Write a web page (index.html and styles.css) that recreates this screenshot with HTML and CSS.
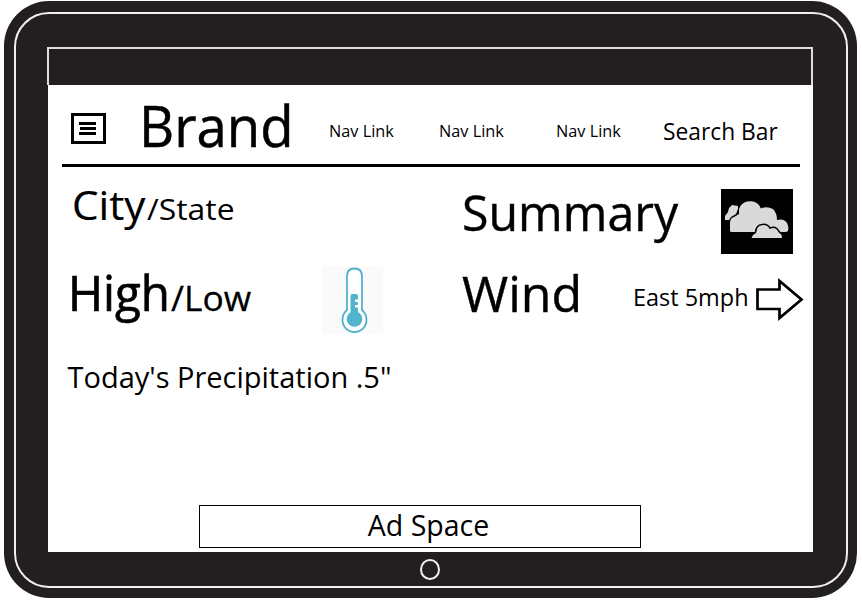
FILE: index.html
```html
<!DOCTYPE html>
<html lang="en">
<head>
<meta charset="utf-8">
<title>Weather</title>
<link rel="stylesheet" href="styles.css">
</head>
<body>
<div class="tablet">
  <div class="status-bar"></div>
  <main class="screen">
    <header class="header">
      <button class="menu" aria-label="Menu"><span></span><span></span><span></span></button>
      <div class="brand">Brand</div>
      <nav class="nav">
        <a>Nav Link</a>
        <a>Nav Link</a>
        <a>Nav Link</a>
      </nav>
      <div class="search">Search Bar</div>
    </header>
    <section class="forecast">
      <div class="row row-place">
        <div class="cell">
          <div class="pair"><span class="city">City</span><span class="state">/State</span></div>
        </div>
        <div class="cell">
          <div class="summary">Summary</div>
          <svg class="cloud" width="72" height="65" viewBox="0 0 72 65">
            <rect width="72" height="65" fill="#000"/>
            <path d="M4 31 V27 L7 23 L8 19 L11 16 L17 17 V20 L15 25 L10 28 L8 31 Z" fill="#d9d9d9"/>
            <path d="M10 43 L9 42 V34 Q9 29 13 28 L18 25 V20 Q20 14 26 12.500 Q34 11 38 16 L40 19.500 Q46 17 52 20 Q56 24 56 31 Q63 29 66 34 Q68 38 67 42 L65 43 Z" fill="#d9d9d9"/>
            <path d="M30.500 49 L32 46 L35 44 Q35 37 41 36 Q46 35 49 40 Q55 37 58 43 Q61 45 61 49 Z" fill="#d9d9d9"/>
            <path d="M34.500 43.500 Q35 36 41 35.500 Q46 34.500 49 39 Q55 36.500 58 42.500 L60 44.500" fill="none" stroke="#000" stroke-width="1.600"/>
          </svg>
        </div>
      </div>
      <div class="row row-temp">
        <div class="cell">
          <div class="pair"><span class="high">High</span><span class="low">/Low</span></div>
          <svg class="thermometer" width="61" height="66" viewBox="0 0 61 66">
            <rect width="61" height="66" fill="#fafafa"/>
            <path d="M25 43 V9 C25 4 28 1.500 32.500 1.500 C37 1.500 40 4 40 9 V43 C43 45.500 44.500 49 44.500 53 C44.500 60 39 65 32.500 65 C26 65 20.500 60 20.500 53 C20.500 49 22 45.500 25 43 Z" fill="#fff" stroke="#51b3cc" stroke-width="1.800"/>
            <circle cx="32.500" cy="52" r="7.800" fill="#51b3cc"/>
            <path d="M28.500 48 V29 Q28.500 27 30.500 27 H34 Q36 27 36 29 V32.500 H33 V35 H36 V38 H33 V40.500 H36 V48 Z" fill="#51b3cc"/>
          </svg>
        </div>
        <div class="cell">
          <div class="wind">Wind</div>
          <div class="speed">East 5mph</div>
          <svg class="arrow" width="50" height="44" viewBox="0 0 50 44">
            <path d="M2.500 11.500 H24.500 V3 L46.500 21.500 L24.500 40 V31 H2.500 Z" fill="#fff" stroke="#000" stroke-width="2.700"/>
          </svg>
        </div>
      </div>
      <div class="row"><div class="rain">Today's Precipitation .5"</div></div>
    </section>
    <aside class="ad">Ad Space</aside>
  </main>
  <div class="home"></div>
</div>
</body>
</html>
```
FILE: styles.css
```css
* { box-sizing: border-box; }

body {
  margin: 0;
  height: 605px;
  overflow: hidden;
  background: #fff;
  color: #000;
  font-family: "Open Sans", "Noto Sans", sans-serif;
}

.tablet {
  position: relative;
  width: 853px;
  height: 597px;
  margin: 1px 0 0 4px;
  padding: 46px 43px 0 43px;
  border-radius: 45px;
  background: #231f20;
  float: left;
}

/* thin ring inside the bezel */
.tablet::before {
  content: "";
  position: absolute;
  inset: 11px 9px 10px 10px;
  border: 2px solid #f1efef;
  border-radius: 35px;
}

.status-bar {
  height: 38px;
  width: 766px;
  border: 2px solid #dedcdc;
  border-bottom: 0;
}

.screen {
  display: flex;
  flex-direction: column;
  width: 765px;
  height: 467px;
  margin-left: 1px;
  background: #fff;
  white-space: nowrap;
}

.header {
  display: flex;
  align-items: flex-start;
  flex: none;
  width: 738px;
  height: 82px;
  margin-left: 14px;
  border-bottom: 3px solid #000;
}

.menu {
  display: flex;
  flex-direction: column;
  gap: 2px;
  flex: none;
  width: 35px;
  height: 31px;
  margin: 28px 0 0 9px;
  padding: 6px 7px 0 5px;
  border: 3px solid #000;
  border-radius: 0;
  background: #fff;
}

.menu span { height: 3px; background: #000; }
.menu span:nth-child(2) { margin-left: 1px; }

.brand {
  flex: none;
  width: 159px;
  margin: 11px 0 0 32.5px;
  font-size: 56.5px;
  line-height: 60px;
  -webkit-text-stroke: .5px #000;
  transform: scaleX(.965);
  transform-origin: left;
}

.nav { display: flex; margin: 36px 0 0 31.5px; }
.nav a { width: 66px; font-size: 16.3px; line-height: 20px; }
.nav a:nth-child(2) { margin-left: 44px; }
.nav a:nth-child(3) { margin-left: 51px; }

.search {
  margin: 31px 0 0 41px;
  font-size: 23.5px;
  line-height: 30px;
  transform: scaleX(.97);
  transform-origin: left;
}

.forecast {
  display: grid;
  grid-template-rows: 95px 83px 80px;
  flex: none;
  padding-left: 14px;
}

.row { display: grid; grid-template-columns: 400px 1fr; }
.cell { display: flex; align-items: flex-start; }
.pair { display: flex; align-items: baseline; flex: none; }
.pair span { flex: none; transform-origin: left; }

.row-place .pair { margin: 13px 0 0 10px; }
.city {
  width: 75px;
  font-size: 40.5px;
  line-height: 50px;
  -webkit-text-stroke: .2px #000;
  transform: scaleX(1.04);
}
.state { font-size: 29px; transform: scaleX(1.1); }

.summary {
  width: 259px;
  margin-top: 15px;
  font-size: 50px;
  line-height: 60px;
  -webkit-text-stroke: .4px #000;
  transform: scaleX(.965);
  transform-origin: left;
}
.cloud { flex: none; margin-top: 22px; }

.row-temp .pair { width: 254.5px; margin-left: 5.5px; }
.high {
  width: 103px;
  font-size: 49px;
  line-height: 60px;
  -webkit-text-stroke: .7px #000;
  transform: scaleX(.97);
}
.low { font-size: 34px; -webkit-text-stroke: .3px #000; transform: scaleX(1.04); }
.thermometer { flex: none; margin-top: 5px; }

.wind {
  width: 170.5px;
  margin: 1px 0 0 0;
  font-size: 50px;
  line-height: 60px;
  -webkit-text-stroke: .4px #000;
}
.speed {
  width: 122.5px;
  margin-top: 20px;
  font-size: 23px;
  line-height: 30px;
  transform: scaleX(1.02);
  transform-origin: left;
}
.arrow { flex: none; margin-top: 16px; }

.rain { margin: 12px 0 0 5.5px; font-size: 29px; line-height: 40px; }

.ad {
  width: 442px;
  height: 43px;
  margin: auto 0 4px 151px;
  padding-left: 17px;
  border: 1px solid #000;
  font-size: 28.5px;
  line-height: 38px;
  text-align: center;
}

.home {
  width: 20px;
  height: 21px;
  margin: 7px 0 0 373px;
  border: 2px solid #f1efef;
  border-radius: 50%;
}
```
